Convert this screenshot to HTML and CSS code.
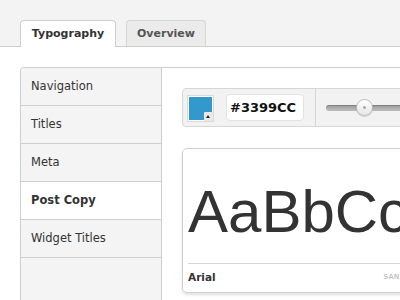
FILE: index.html
```html
<!DOCTYPE html>
<html>
<head>
<meta charset="utf-8">
<link rel="stylesheet" href="styles.css">
</head>
<body>
<div class="topbar">
  <div class="tab active">Typography</div>
  <div class="tab">Overview</div>
</div>
<div class="main">
  <div class="panel">
    <ul class="sidenav">
      <li>Navigation</li>
      <li>Titles</li>
      <li>Meta</li>
      <li class="current">Post Copy</li>
      <li>Widget Titles</li>
    </ul>
    <div class="content">
      <div class="toolbar">
        <div class="color-group">
          <div class="swatch"><span class="swatch-corner"></span></div>
          <div class="hex">#3399CC</div>
        </div>
        <div class="slider-group">
          <div class="slider"><div class="track"></div><div class="knob"></div></div>
        </div>
      </div>
      <div class="preview">
        <div class="sample">AaBbCc</div>
        <div class="meta"><span class="fontname">Arial</span><span class="family">SANS-SERIF</span></div>
      </div>
    </div>
  </div>
</div>
</body>
</html>
```
FILE: styles.css
```css
* { box-sizing: border-box; }
html, body { margin: 0; padding: 0; }
body {
  width: 400px;
  height: 300px;
  overflow: hidden;
  background: #fff;
  font-family: "DejaVu Sans", "Liberation Sans", sans-serif;
  color: #333;
}
.topbar {
  height: 47px;
  background: #f3f3f3;
  border-bottom: 1px solid #cfcfcf;
  display: flex;
  align-items: flex-end;
  gap: 10px;
  padding-left: 20px;
}
.tab {
  height: 26px;
  border: 1px solid #d6d6d6;
  border-bottom: none;
  border-radius: 4px 4px 0 0;
  background: #ebebeb;
  color: #555;
  font-weight: bold;
  font-size: 11px;
  line-height: 25px;
  text-align: center;
  width: 80px;
}
.tab.active {
  width: 96px;
  height: 27px;
  margin-bottom: -1px;
  background: #fff;
  border-color: #cfcfcf;
  color: #333;
}
.main {
  padding: 20px 0 0 20px;
}
.panel {
  display: flex;
  height: 233px;
  border: 1px solid #cfcfcf;
  border-right: none;
  border-bottom: none;
  border-top-left-radius: 4px;
  overflow: hidden;
}
.sidenav {
  list-style: none;
  margin: 0;
  padding: 0;
  width: 141px;
  flex: none;
  background: #f4f4f4;
  border-right: 1px solid #cfcfcf;
}
.sidenav li {
  height: 38px;
  line-height: 37px;
  border-bottom: 1px solid #cfcfcf;
  padding-left: 10px;
  font-size: 11.5px;
  color: #333;
}
.sidenav li.current {
  background: #fff;
  font-weight: bold;
}
.content {
  flex: none;
  width: 300px;
  padding: 20px 0 0 20px;
}
.toolbar {
  height: 39px;
  width: 280px;
  display: flex;
  align-items: stretch;
  background: #f2f2f2;
  border: 1px solid #d6d6d6;
  border-radius: 4px;
}
.color-group {
  display: flex;
  align-items: center;
  gap: 13px;
  padding: 0 11px 0 5px;
  border-right: 1px solid #d6d6d6;
}
.swatch {
  position: relative;
  width: 25px;
  height: 25px;
  margin-top: 1px;
  background: #3399cc;
  border: 1px solid #fff;
  box-shadow: 0 0 0 1px #dadada;
}
.swatch-corner {
  position: absolute;
  right: -1px;
  bottom: -1px;
  width: 9px;
  height: 9px;
  background: #e9e9e9;
  border-top-left-radius: 1px;
}
.swatch-corner::after {
  content: "";
  position: absolute;
  left: 2px;
  top: 3px;
  border-left: 2.5px solid transparent;
  border-right: 2.5px solid transparent;
  border-bottom: 3px solid #222;
}
.hex {
  width: 78px;
  height: 27px;
  background: #fff;
  border: 1px solid #e2e2e2;
  border-radius: 4px;
  padding-left: 3px;
  font-weight: bold;
  font-size: 13px;
  line-height: 25px;
  color: #111;
}
.slider-group {
  display: flex;
  align-items: center;
  padding-left: 10px;
}
.slider {
  position: relative;
  width: 120px;
  height: 16px;
  display: flex;
  align-items: center;
}
.track {
  width: 100%;
  height: 6px;
  border-radius: 3px;
  background: linear-gradient(#9c9c9c, #bdbdbd);
  box-shadow: inset 0 1px 1px rgba(0,0,0,0.2);
}
.knob {
  position: absolute;
  left: 30px;
  top: -1px;
  width: 17px;
  height: 17px;
  border-radius: 50%;
  background: linear-gradient(#fff, #e6e6e6);
  border: 1px solid #bdbdbd;
  box-shadow: 0 1px 1px rgba(0,0,0,0.15);
}
.knob::after {
  content: "";
  position: absolute;
  left: 6px;
  top: 6px;
  width: 3px;
  height: 3px;
  border-radius: 50%;
  background: #aaa;
}
.preview {
  margin-top: 21px;
  width: 260px;
  height: 145px;
  border: 1px solid #d0d0d0;
  border-radius: 5px;
  box-shadow: 0 2px 3px rgba(0,0,0,0.12);
  padding: 29px 0 0 5px;
}
.sample {
  font-family: "Liberation Sans", Arial, sans-serif;
  font-size: 60px;
  line-height: 67px;
  color: #333;
  white-space: nowrap;
}
.meta {
  margin-top: 18px;
  border-top: 1px solid #d6d6d6;
  display: flex;
  align-items: center;
  height: 26px;
  padding-right: 11px;
}
.fontname {
  font-weight: bold;
  font-size: 10.5px;
  color: #333;
}
.family {
  margin-left: auto;
  font-size: 7px;
  letter-spacing: 0.5px;
  color: #aaa;
}
```
